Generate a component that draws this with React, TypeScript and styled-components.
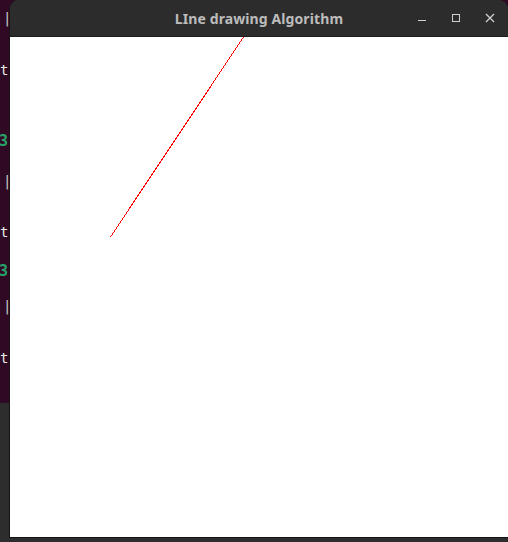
import React from "react";
import styled, { createGlobalStyle } from "styled-components";

const Global = createGlobalStyle`
  html, body { margin: 0; padding: 0; background: #2d2d2d; overflow: hidden; }
  #root { width: 508px; height: 542px; }
`;

const Desktop = styled.div`
  position: relative;
  width: 508px;
  height: 542px;
  background: #2d2d2d;
  overflow: hidden;
`;

const Terminal = styled.div`
  width: 508px;
  height: 403px;
  background: #300a24;
  display: flex;
  flex-direction: column;
  font-family: "DejaVu Sans Mono", monospace;
  font-size: 14px;
  line-height: 16px;
`;

const TermLine = styled.div<{ $gap: number; $color: string; $bold?: boolean; $shift?: number }>`
  margin-top: ${(p) => p.$gap}px;
  margin-left: ${(p) => p.$shift ?? 0}px;
  height: 16px;
  color: ${(p) => p.$color};
  font-weight: ${(p) => (p.$bold ? 700 : 400)};
  font-size: ${(p) => (p.$bold ? 15 : 14)}px;
  white-space: pre;
`;

const Window = styled.div`
  position: absolute;
  left: 9px;
  top: 0;
  width: 499px;
  height: 538px;
  display: flex;
  flex-direction: column;
  border-radius: 9px 9px 0 0;
  border-left: 1px solid #141414;
  border-bottom: 1px solid #141414;
  box-sizing: border-box;
  overflow: hidden;
  background: #2c2c2c;
`;

const TitleBar = styled.div`
  height: 36px;
  flex: none;
  background: #2c2c2c;
  border-bottom: 1px solid #1c1c1c;
  display: grid;
  grid-template-columns: 1fr auto 1fr;
  align-items: center;
`;

const Title = styled.div`
  grid-column: 2;
  font-family: "Noto Sans", "DejaVu Sans", sans-serif;
  font-weight: 700;
  font-size: 14px;
  color: #bcbcbc;
  letter-spacing: 0.1px;
  padding-top: 1px;
`;

const Controls = styled.div`
  grid-column: 3;
  justify-self: end;
  display: flex;
  align-items: center;
  gap: 18px;
  padding-right: 10px;
`;

const CtrlButton = styled.div`
  width: 16px;
  height: 16px;
  display: flex;
  align-items: center;
  justify-content: center;
  color: #cfcfcf;
`;

const Canvas = styled.div`
  flex: 1;
  background: #ffffff;
  position: relative;
`;

const terminalLines = [
  { gap: 10, text: "|", color: "#c8c8c8", shift: 3 },
  { gap: 36, text: "t:", color: "#e8e8e8" },
  { gap: 55, text: "3s", color: "#26a269", bold: true, shift: -1 },
  { gap: 24, text: "|", color: "#c8c8c8", shift: 3 },
  { gap: 35, text: "t:", color: "#e8e8e8" },
  { gap: 23, text: "3s", color: "#26a269", bold: true, shift: -1 },
  { gap: 19, text: "|", color: "#c8c8c8", shift: 3 },
  { gap: 36, text: "t:", color: "#e8e8e8" },
];

export default function App() {
  return (
    <>
      <Global />
      <Desktop>
        <Terminal>
          {terminalLines.map((l, i) => (
            <TermLine key={i} $gap={l.gap} $color={l.color} $bold={l.bold} $shift={l.shift}>
              {l.text}
            </TermLine>
          ))}
        </Terminal>
        <Window>
          <TitleBar>
            <Title>LIne drawing Algorithm</Title>
            <Controls>
              <CtrlButton>
                <svg width="10" height="10" viewBox="0 0 10 10">
                  <rect x="1" y="7" width="8" height="1" fill="currentColor" />
                </svg>
              </CtrlButton>
              <CtrlButton>
                <svg width="10" height="10" viewBox="0 0 10 10" shapeRendering="crispEdges">
                  <rect x="1.5" y="1.5" width="7" height="7" fill="none" stroke="currentColor" strokeWidth="1" />
                </svg>
              </CtrlButton>
              <CtrlButton>
                <svg width="10" height="10" viewBox="0 0 10 10">
                  <path d="M1 1 L9 9 M9 1 L1 9" stroke="currentColor" strokeWidth="1.3" />
                </svg>
              </CtrlButton>
            </Controls>
          </TitleBar>
          <Canvas>
            <svg width="498" height="500" style={{ display: "block" }} shapeRendering="crispEdges">
              <line x1="233.5" y1="0" x2="100.5" y2="200" stroke="#ff0000" strokeWidth="1" />
            </svg>
          </Canvas>
        </Window>
      </Desktop>
    </>
  );
}
